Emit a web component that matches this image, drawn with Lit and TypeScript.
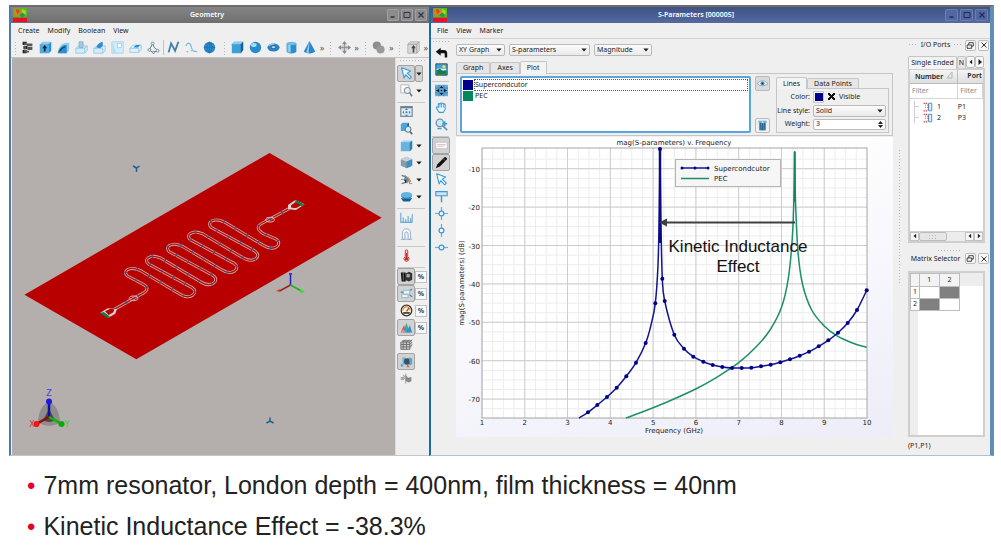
import { LitElement, html, css, svg } from "lit";
import { customElement } from "lit/decorators.js";

type Pt = [number, number];

/* 16 x 16 drawings used by the tool bars */
const B = "#2f8fce";
const L = "#8fcbee";
const D = "#1b5f96";
const icons: Record<string, unknown> = {
  logo: svg`<path d="M0 0h16v16H0z" fill="#58b52c"/><path d="M1 1h6l3 3-2 4-5 1-2-3z" fill="#c98a20"/><path d="M3 2l3-1 2 3-3 3z" fill="#e2431c"/><path d="M10 1l5 2-1 5-4-2z" fill="#a9d421"/><path d="M7 8l4-3 3 3-3 3z" fill="#2a9a48"/><path d="M0 11h16v5H0z" fill="#e8102a"/>`,
  film: svg`<path d="M2 1h5v4H2zM3 6h5v4H3zM2 11h5v4H2z" fill="#222"/><path d="M7 3h7v3H7zM8 7h6v4H8zM7 12h3v2H7z" fill="#555"/><path d="M5 2v12" stroke="#999"/>`,
  boxUp: svg`<path d="M1 4l3-3h11v11l-3 3H1z" fill="${L}"/><path d="M1 4h11v11H1z" fill="#4eabe0"/><path d="M12 4l3-3v11l-3 3z" fill="${B}"/><path d="M6 13V9H4l3-4 3 4H8v4z" fill="#0b2438"/>`,
  sweep: svg`<path d="M1 14C2 7 6 2 12 2h3v9l-3 4H1z" fill="${L}"/><path d="M1 14C4 7 7 5 12 5v10H1z" fill="${B}"/><path d="M3 13c2-4 4-5 7-6" stroke="#145" fill="none" stroke-width="1.500"/>`,
  stack1: svg`<path d="M1 9l4-3h10v6l-3 3H1z" fill="#d4ecfa" stroke="#8cc6e8"/><path d="M1 9h11v6M12 9l3-3" fill="none" stroke="#8cc6e8"/><path d="M5 1h5v7H5z" fill="#a9c8dc" stroke="#7fb0cf"/>`,
  stack2: svg`<path d="M1 9l4-3h10v6l-3 3H1z" fill="#d4ecfa" stroke="#8cc6e8"/><path d="M1 9h11v6" fill="none" stroke="#8cc6e8"/><path d="M4 8C5 4 8 2 12 1v5L9 9z" fill="${B}"/>`,
  sheet: svg`<path d="M1 1h14v14H1z" fill="#d2ecf9" stroke="#9fd3f0"/><path d="M2 2l5 13H2z" fill="#b8def4"/><rect x="8" y="3" width="5" height="5" fill="#fff" stroke="#9fd3f0"/>`,
  slab: svg`<path d="M1 9l4-4h10v5l-3 4H1z" fill="#e0f1fb" stroke="#8cc6e8"/><path d="M1 9h11v5" fill="none" stroke="#8cc6e8"/><path d="M6 7l3-2h5l-3 3H6z" fill="${B}"/>`,
  nodes: svg`<path d="M3 11L7 3l2 5 5 4-7 2z" fill="none" stroke="#5e7f95" stroke-width="1.200"/><g fill="#fff" stroke="#5e7f95"><circle cx="7" cy="3" r="1.700"/><circle cx="3" cy="11" r="1.700"/><circle cx="13" cy="12" r="1.700"/><circle cx="8" cy="14" r="1.400"/></g>`,
  poly: svg`<path d="M2 14L5 3l5 9 4-11" fill="none" stroke="#3f7fae" stroke-width="2.200"/>`,
  curve: svg`<path d="M1 6c3-6 6-3 7 2s3 5 7 5" fill="none" stroke="#7db8dc" stroke-width="1.500"/><path d="M2 13h2M7 12h2" stroke="#7db8dc" stroke-width="1.500"/>`,
  globe: svg`<circle cx="8" cy="8" r="7" fill="#2a86c8"/><path d="M1 8h14M8 1v14M8 1q-6 7 0 14M8 1q6 7 0 14" fill="none" stroke="#1f6aa5" stroke-width=".7"/>`,
  cube: svg`<path d="M1 4l3-3h11v10l-3 4H1z" fill="#3f9fd9"/><path d="M1 4l3-3h11l-3 3z" fill="${L}"/><path d="M12 4l3-3v10l-3 4z" fill="${D}"/>`,
  sphere: svg`<circle cx="8" cy="8" r="7" fill="#2a8bcb"/><ellipse cx="6" cy="5" rx="3.500" ry="2.500" fill="#a8daf5"/>`,
  torus: svg`<ellipse cx="8" cy="8" rx="7.500" ry="5" fill="#2a83c0"/><ellipse cx="8" cy="7.500" rx="3" ry="1.500" fill="#f4f4f4" stroke="${D}"/><path d="M2 6q3-3 7-2" stroke="${L}" stroke-width="1.500" fill="none"/>`,
  cylinder: svg`<path d="M2 3v10c0 3 12 3 12 0V3z" fill="#2f8fce"/><path d="M3 4v10h4V4z" fill="${L}"/><ellipse cx="8" cy="3" rx="6" ry="2" fill="#70bce6"/>`,
  cone: svg`<path d="M8 0l7 13c-2 3-12 3-14 0z" fill="#2a86c8"/><path d="M8 0L4 14l3 1z" fill="${L}"/>`,
  move: svg`<path d="M8 2v12M2 8h12" fill="none" stroke="#909090" stroke-width="1.500"/><path d="M8 0L5 4h6zM8 16l-3-4h6zM0 8l4-3v6zM16 8l-4-3v6z" fill="#888"/><ellipse cx="8" cy="8" rx="4" ry="2" fill="none" stroke="#aaa"/>`,
  union: svg`<circle cx="6" cy="5.500" r="5" fill="#8d8d8d"/><circle cx="10.500" cy="10.500" r="5" fill="#999"/>`,
  grayBox: svg`<path d="M1 4l3-3h11v11l-3 3H1z" fill="#d8d8d8" stroke="#aaa"/><path d="M12 4v11M1 4h11l3-3" stroke="#999" fill="none"/><path d="M7 14V9H5l3-4 3 4H9v5z" fill="#444"/>`,
  arrow: svg`<path d="M2 1l11 4-4 2.500 5 5-2 2-5-5-2 4z" fill="#eaf6fd" stroke="#3a9ad6" stroke-width="1.300" stroke-linejoin="round"/>`,
  zoomBox: svg`<path d="M1 1h10v10H1z" fill="#fff" stroke="#aaa"/><circle cx="9" cy="8" r="3.700" fill="#e6f0f6" stroke="#8a97a0" stroke-width="1.300"/><path d="M12 11l3 4" stroke="#6b7880" stroke-width="2"/>`,
  fit: svg`<path d="M1 2h14v12H1z" fill="#dfeaf1" stroke="#7c8e9a" stroke-width="1.500"/><path d="M1 3h14" stroke="#6c7e8a" stroke-width="2"/><path d="M8 4l2 2H6zM8 14l2-2H6zM3 9l2-2v4zM13 9l-2-2v4z" fill="#3388c2"/><circle cx="8" cy="9" r="1.300" fill="#3388c2"/>`,
  zoomCube: svg`<path d="M1 3l2-2h8v8l-2 2H1z" fill="#4ca5db"/><path d="M9 3l2-2v8l-2 2z" fill="${D}"/><circle cx="10" cy="9" r="3.500" fill="#dceefa" stroke="#6e8392" stroke-width="1.300"/><path d="M12.500 12l2.500 3" stroke="#566" stroke-width="2"/>`,
  cubeFlat: svg`<path d="M1 4l3-2h11v10l-3 3H1z" fill="#67b3e0"/><path d="M1 4l3-2h11l-3 2z" fill="#a9d8f2"/><path d="M12 4l3-2v10l-3 3z" fill="#347ead"/>`,
  cubeGray: svg`<path d="M8 1l7 3v8l-7 3-7-3V4z" fill="#8a9aa6"/><path d="M8 1l7 3-7 3-7-3z" fill="#c3d2dc"/><path d="M8 7l7-3v8l-7 3z" fill="#3f8fc4"/>`,
  orbit: svg`<path d="M2 3l6 2 4 7M2 13l7-2" stroke="#777" fill="none" stroke-width="1.500"/><path d="M6 2l5 5-2 6-4-4z" fill="#5c8fb0"/><path d="M10 4l4 6-3 2z" fill="#e08a3c"/><path d="M5 8l3 1-1 4z" fill="#222"/><path d="M1 8h4M11 13h4" stroke="#888"/>`,
  layers: svg`<path d="M1 10l3 4h8l3-4z" fill="#1f5f8e"/><path d="M1 7l3 4h8l3-4z" fill="#2f80b8"/><ellipse cx="8" cy="6" rx="7" ry="3.500" fill="#62b4e2"/>`,
  ruler: svg`<path d="M1 2v12h14M4 14V8M7 14V10M10 14V6M13 14V9M15 14V4" stroke="#6aa9cf" fill="none" stroke-width="1.400"/>`,
  magnet: svg`<path d="M3 14V6a5 5 0 0 1 10 0v8h-3V7a2 2 0 0 0-4 0v7z" fill="#f6f9fc" stroke="#9fb4cc" stroke-width="1.300"/><path d="M1 14h14" stroke="#9fb4cc"/>`,
  thermo: svg`<path d="M6.500 2.500a1.500 1.500 0 0 1 3 0v7a3 3 0 1 1-3 0z" fill="#f6dada" stroke="#c43c3c" stroke-width="1.200"/><circle cx="8" cy="12" r="2.200" fill="#c92a2a"/><path d="M8 5v7" stroke="#c92a2a" stroke-width="1.500"/>`,
  darkCube: svg`<path d="M1 3h6v11H2z" fill="#111"/><path d="M6 5l5-3 4 2v8l-4 2-5-2z" fill="#333"/><path d="M8 5h4v4H8z" fill="#aaa"/><path d="M4 2v11" stroke="#888"/>`,
  wire: svg`<path d="M4 4h8v5H4zM2 9h8v4H2z" fill="#e4f2fa" stroke="#8fb0c4"/><path d="M1 6l3 1M12 10l3 2M12 4l3-1" stroke="#3e8ab8" stroke-width="1.500"/>`,
  gauge: svg`<circle cx="8" cy="8" r="6.500" fill="#faf4de" stroke="#333" stroke-width="1.500"/><path d="M3.500 8a4.500 4.500 0 0 1 9 0" fill="none" stroke="#d9953b" stroke-width="1.500"/><path d="M8 9l3-4" stroke="#c22" stroke-width="1.300"/><path d="M4 11h8" stroke="#333" stroke-width="2"/>`,
  peaks: svg`<path d="M1 14L5 5l3 9z" fill="#e34a4a"/><path d="M4 14l4-12 4 12z" fill="#29b39a"/><path d="M8 14l4-9 3 9z" fill="#3d86dc"/><path d="M1 14l3-4 3 4z" fill="#f08ab4"/>`,
  mesh: svg`<path d="M1 5l3-3h11v9l-3 3H1z" fill="#c9c9c9"/><path d="M1 5h11v9H1zM1 8h11M1 11h11M4 5v9M8 5v9M12 5l3-3M12 8l3-3M12 11l3-3M4 5l3-3M8 5l3-3M2.500 3.500h11" fill="none" stroke="#666"/>`,
  dish: svg`<path d="M3 3h4v9H3z" fill="#6ab4dc"/><circle cx="9" cy="8" r="4" fill="#3d4f5c"/><path d="M11 3l4 1v7l-3 2z" fill="#57a6d4"/><path d="M1 10l4 4H1z" fill="#3f9fd9"/><path d="M9 11l3 4H8z" fill="#c66"/>`,
  burst: svg`<path d="M1 8h11M7 2v12M4 4l8 8" stroke="#aaa" stroke-width="1.500"/><path d="M7 4l3 3 4-1v5l-3 2-4-2z" fill="#888"/><path d="M1 6h4v4H1z" fill="#aaa"/>`,
  undo: svg`<path d="M1 7l6-5v3h4c3 0 4 2 4 4v5h-3v-4c0-1-1-1-2-1H7v3z" fill="#111"/>`,
  image: svg`<path d="M1 1h14v14H1z" fill="#3ba4e4" stroke="#333"/><path d="M2 7h12v2H2z" fill="#eef"/><path d="M2 9l4-2 4 3 4-1v5H2z" fill="#15803c"/><circle cx="11" cy="4.500" r="2" fill="#f6dc3c"/>`,
  fit4: svg`<path d="M0 1h16v14H0z" fill="#62aede"/><path d="M0 5h16M0 11h16M5 1v14M11 1v14" stroke="#3f7fae"/><path d="M8 2l2 3H6zM8 14l2-3H6zM1 8l4-2v4zM15 8l-4-2v4zM7 7h2v2H7z" fill="#0d1c28"/>`,
  hand: svg`<path d="M5 14L2 9c-1-2 1-2 2-1V4c0-1 1.500-1 2 0 0-2 2-2 2 0 0-2 2-2 2.500 0 0-1 2-1 2 .500V10l-2 4z" fill="#eaf6fd" stroke="#3a9ad6" stroke-width="1.300" stroke-linejoin="round"/><path d="M6 4v4M8 3.500V8M10.500 4v4" stroke="#3a9ad6"/>`,
  zoomPm: svg`<circle cx="6" cy="6" r="4.500" fill="#cfe8f7" stroke="#6d95b0" stroke-width="1.600"/><path d="M9 9l6 6" stroke="#6d95b0" stroke-width="2.200"/><path d="M9 7h6M12 4v6M3 13h5" stroke="#3a9ad6" stroke-width="1.800"/>`,
  legend: svg`<path d="M1 4h14v8H1z" fill="#fbfbfb" stroke="#bdbdbd"/><path d="M3 7h10" stroke="#e3a0a0"/><path d="M3 9h8" stroke="#b5c9e0"/>`,
  pen: svg`<path d="M1 15l2-5 8-8c1-1 2-1 3 0s1 2 0 3l-8 8z" fill="#111"/><path d="M10 3l3 3" stroke="#777"/>`,
  flag: svg`<path d="M1 2h14v5H1z" fill="#cfe2ee" stroke="#3a9ad6" stroke-width="1.300"/><path d="M8 7v8" stroke="#3a9ad6" stroke-width="1.800"/>`,
  markXY: svg`<path d="M8 0v16M0 8h16" stroke="#62b0de" stroke-width="1.500"/><circle cx="8" cy="8" r="3" fill="#f4fafd" stroke="#3a9ad6" stroke-width="1.500"/>`,
  markY: svg`<path d="M8 0v16" stroke="#62b0de" stroke-width="1.500"/><circle cx="8" cy="8" r="3" fill="#f4fafd" stroke="#3a9ad6" stroke-width="1.500"/>`,
  markX: svg`<path d="M0 8h16" stroke="#62b0de" stroke-width="1.500"/><circle cx="8" cy="8" r="3" fill="#f4fafd" stroke="#3a9ad6" stroke-width="1.500"/>`,
  eye: svg`<path d="M0 8q8-8 16 0q-8 7-16 0z" fill="#eef5fa" stroke="#7a97aa"/><circle cx="8" cy="8" r="3" fill="#3d8fc4"/><circle cx="8" cy="8" r="1" fill="#123"/>`,
  trash: svg`<path d="M2 1h12v3H2z" fill="#79b4d4"/><path d="M3 4h10v11H3z" fill="#4a8fb8"/><path d="M5 4l1 11M8 4v11M11 4l-1 11" stroke="#1d587e" fill="none"/><path d="M7 1l2 4" stroke="#dff"/>`,
  port: svg`<path d="M9 2h5v12H9z" fill="#dff0fb" stroke="#3a8fd0" stroke-width="1.500"/><path d="M1 2h7M1 14h7M8 4v8" stroke="#d03030" stroke-width="2" stroke-dasharray="2 1.500"/><path d="M4 4v8" stroke="#4a78b0" stroke-dasharray="2 1.500"/>`,
  restore: svg`<path d="M5 3h8v6H5z" fill="none" stroke="#333" stroke-width="1.600"/><path d="M2 7h8v6H2z" fill="#f4f4f4" stroke="#333" stroke-width="1.600"/>`,
  close: svg`<path d="M3 3l10 10M13 3L3 13" stroke="#333" stroke-width="2"/>`,
  winMin: svg`<path d="M3 12h8" stroke="currentColor" stroke-width="3"/>`,
  winMax: svg`<path d="M2 3h12v10H2z" fill="none" stroke="currentColor" stroke-width="2"/>`,
  winClose: svg`<path d="M3 3l10 10M13 3L3 13" stroke="currentColor" stroke-width="2.600"/>`,
  left: svg`<path d="M11 2v12L4 8z" fill="currentColor"/>`,
  right: svg`<path d="M5 2v12l7-6z" fill="currentColor"/>`,
  down: svg`<path d="M1 4h14L8 12z" fill="currentColor"/>`,
};

const icon = (name: string, size = 13) =>
  html`<svg class="ic" width=${size} height=${size} viewBox="0 0 16 16" aria-hidden="true">${icons[name]}</svg>`;

const tool = (name: string, on = false) =>
  html`<button class="tool ${on ? "on" : ""}" aria-label=${name}>${icon(name)}</button>`;

const windowBar = (title: string) => html`
  <header class="title">
    ${icon("logo", 14)}
    <h1>${title}</h1>
    <button aria-label="Minimize">${icon("winMin", 8)}</button>
    <button aria-label="Maximize">${icon("winMax", 8)}</button>
    <button aria-label="Close">${icon("winClose", 8)}</button>
  </header>`;

const menuBar = (items: string[]) =>
  html`<nav class="menu">${items.map((m) => html`<button>${m}</button>`)}</nav>`;

const shared = css`
  * { box-sizing: border-box; }
  :host {
    display: flex;
    flex-direction: column;
    min-width: 0;
    background: #efefef;
    color: #1c1c1c;
    font: 7px/10px "Noto Sans", "Open Sans", sans-serif;
  }
  button, input, select { font: inherit; color: inherit; margin: 0; padding: 0; border: 0; background: none; border-radius: 0; }
  button { display: flex; align-items: center; justify-content: center; }
  h1, h2 { font: inherit; margin: 0; }
  .ic { display: block; flex: none; }
  .title { display: flex; align-items: center; gap: 2px; height: 16px; padding: 0 2px; color: #fff; }
  .title h1 { flex: 1; text-align: center; font-weight: 600; }
  .title button { width: 12px; height: 12px; border: 1px solid; border-radius: 1px; }
  .menu { display: flex; gap: 8px; height: 15px; align-items: center; }
  .tool { width: 18px; height: 17px; flex: none; border: 1px solid transparent; }
  .tool.on { background: #d2d2d2; border-color: #a3a3a3; border-radius: 2px; }
  .sep { flex: none; height: 4px; width: 28px; border-bottom: 1px solid #c9c9c9; }
  .grip { flex: none; background: radial-gradient(circle, #b9b9b9 0 0.8px, transparent 1px) 0 0 / 3px 3px; }
`;

@customElement("geometry-window")
class GeometryWindow extends LitElement {
  static styles = [
    shared,
    css`
      :host { border: solid #4c7da6; border-width: 2px 0 0 2px; border-top-color: #6d6d6d; border-bottom: 1px solid #c6c6c6; }
      .title { background: linear-gradient(#858585, #6e6e6e); }
      .title button { background: #8c8c8c; border-color: #a0a0a0; color: #2b3350; }
      .menu { padding-left: 7px; }
      .bar { display: flex; align-items: center; height: 20px; padding-left: 3px; border-bottom: 1px solid #c4c4c4; }
      .bar .grip { width: 4px; height: 14px; }
      .bar .grip:not(:first-child) { margin: 0 2px 0 4px; }
      .vsep { width: 1px; height: 15px; background: #c4c4c4; margin: 0 1px; }
      .more { width: 8px; color: #555; font-size: 9px; }
      .body { display: flex; flex: 1; }
      .view { flex: 1; min-width: 0; margin-left: 1px; background: #b4afad; }
      .view svg { display: block; width: 100%; height: auto; }
      .side { flex: none; width: 34px; padding: 0 1px; border-left: 1px solid #dcdcdc; }
      .side .grip { width: 28px; height: 4px; margin: 1px 0 2px 2px; }
      .row { display: flex; align-items: center; }
      .drop { width: 8px; height: 17px; }
      .drop.on { background: #d2d2d2; border: 1px solid #a3a3a3; border-radius: 2px; }
      .pct { width: 12px; height: 12px; background: #f8f8f8; border: 1px solid #c2c2c2; font-weight: 700; color: #345; }
    `,
  ];

  render() {
    const turns = [0, 1, 2, 3, 4].map((i) => {
      const p = (x: number, y: number) => `${x + 63 * i} ${y - 36.4 * i}`;
      return `L${p(127, 258)} C${p(112, 246)} ${p(130, 226)} ${p(165, 241)} L${p(284, 312)} C${p(315, 332)} ${p(345, 308)} ${p(320, 292)}`;
    });
    const line = `M88 358 L166 314 C192 302 190 291 175 283 ${turns.join(" ")} L535 131 C508 114 520 104 544 93 L612 56`;
    const side: [string, boolean, string][] = [
      ["arrow", true, "drop"], ["zoomBox", false, "drop"], ["|", false, ""], ["fit", false, ""], ["zoomCube", false, ""],
      ["cubeFlat", false, "drop"], ["cubeGray", false, "drop"], ["orbit", false, "drop"], ["layers", false, "drop"],
      ["|", false, ""], ["ruler", false, ""], ["magnet", false, ""], ["|", false, ""], ["thermo", false, ""], ["|", false, ""],
      ["darkCube", true, "pct"], ["wire", true, "pct"], ["gauge", false, "pct"], ["peaks", true, "pct"],
      ["mesh", false, ""], ["dish", true, ""], ["burst", false, ""],
    ];
    return html`
      ${windowBar("Geometry")} ${menuBar(["Create", "Modify", "Boolean", "View"])}
      <div class="bar">
        <span class="grip"></span>
        ${["film", "boxUp", "sweep", "stack1", "stack2", "sheet", "slab", "nodes"].map((n) => tool(n))}
        <span class="vsep"></span>
        ${["poly", "curve", "globe"].map((n) => tool(n))}
        <span class="grip"></span>
        ${["cube", "sphere", "torus", "cylinder", "cone"].map((n) => tool(n))}
        <button class="more">»</button>
        ${["move", "union", "grayBox"].map((n) => html`<span class="grip"></span>${tool(n)}<button class="more">»</button>`)}
      </div>
      <div class="body">
        <div class="view">
          <svg viewBox="12 58 383 397" role="img" aria-label="Resonator layout">
            <path d="M269.500 153L381.700 217.700 136.300 359.300 24.500 294.700z" fill="#b90000" />
            <g transform="translate(85 190) scale(.33333)" fill="none" stroke-linejoin="round">
              <path d=${line} stroke="#cfaaa6" stroke-width="9" />
              <path d=${line} stroke="#a81414" stroke-width="4" />
              <path d=${line} stroke="#2d5490" stroke-width="11" stroke-dasharray="3 37" />
              <ellipse cx="146" cy="325" rx="13" ry="7" stroke="#d9bdb9" stroke-width="3" />
              <ellipse cx="555" cy="89" rx="13" ry="7" stroke="#d9bdb9" stroke-width="3" />
              <path d="M46 368l22-13 28 2-5 14-21 12z" fill="#d8d2ce" />
              <path d="M60 364l16-8 12 2-3 9-14 8z" fill="#b90000" />
              <path d="M44 369l12-3 18 13-5 6z" fill="#127a42" />
              <path d="M609 45l22-15 28 13-26 17-24-2z" fill="#d8d2ce" />
              <path d="M618 46l14-10 18 9-16 9-15-1z" fill="#b90000" />
              <path d="M632 30l28 14-10 4-20-11z" fill="#127a42" />
            </g>
            <g stroke="#1c5f92" stroke-width="1.500" fill="none">
              <path d="M136.500 168v4M133 166l3.500 2 3-2" />
              <path d="M270 417.500v3.500M266.500 423l3.500-2 3.500 2" />
            </g>
            <g stroke-width="1.500">
              <path d="M290.500 285v-11" stroke="#2222c8" /><path d="M289 273h3v2h-3z" fill="#3a3ad8" />
              <path d="M290.500 285l-11 6" stroke="#a02020" /><path d="M276 291l4-2v3z" fill="#e33" />
              <path d="M290.500 285l11 6" stroke="#18b418" /><path d="M300 289l5 3-5 1z" fill="#3d3" />
            </g>
            <path d="M49 402c7 2 11 12 11 20-5 5-17 5-22 0 0-8 4-18 11-20z" fill="#8f8c8b" />
            <path d="M49 409l6 11q-6 4-12 0z" fill="#4c4a49" />
            <path d="M49 417v-14" stroke="#1010a8" stroke-width="2.500" />
            <circle cx="49" cy="401.500" r="3" fill="#1a1ae0" />
            <path d="M49 417l-11 6" stroke="#8c0c0c" stroke-width="2.500" />
            <circle cx="36.500" cy="424" r="3" fill="#f01414" />
            <path d="M49 417l11 6" stroke="#0cb40c" stroke-width="2.500" />
            <circle cx="61.500" cy="424" r="3" fill="#0ea80e" />
            <g font-family="DejaVu Sans, sans-serif" font-size="8" text-anchor="middle">
              <text x="49" y="396" fill="#4040d8">Z</text>
              <text x="32" y="427" fill="#e03030">X</text>
              <text x="67" y="427" fill="#38d038">Y</text>
            </g>
          </svg>
        </div>
        <div class="side">
          <div class="grip"></div>
          ${side.map(([n, on, extra]) =>
            n === "|"
              ? html`<div class="sep"></div>`
              : html`<div class="row">
                  ${tool(n, on)}
                  ${extra === "drop" ? html`<button class="drop ${on ? "on" : ""}" aria-label="More">${icon("down", 6)}</button>` : ""}
                  ${extra === "pct" ? html`<button class="pct">%</button>` : ""}
                </div>`
          )}
        </div>
      </div>
    `;
  }
}

const blueMarks: Pt[] = [
  [588, 412.3], [597.3, 405], [607, 397], [616.7, 387.7], [626.3, 376.3], [636, 362.7], [645.7, 343], [655.3, 303.3],
  [660, 149], [662.3, 278.7], [664.7, 301], [674.3, 334.7], [684, 348.7], [693.3, 356.7], [703.3, 361.7], [712.7, 365],
  [722.3, 367], [732, 368], [741.7, 368], [751.3, 367.7], [761, 366.3], [770.7, 364.7], [780.3, 362.3], [790, 359.3],
  [799.7, 355.7], [809, 351.7], [818.7, 346.3], [828.3, 340.3], [838, 332.7], [847.7, 323], [857, 310], [866.7, 290.3],
];
const blueRise: Pt[] = [[579, 418], ...blueMarks.slice(0, 7), [651, 325], ...blueMarks.slice(7, 8), [658, 265], [659.3, 210], [660, 149]];
const blueFall: Pt[] = [[660, 149], [660.8, 215], ...blueMarks.slice(9)];
const greenRise: Pt[] = [
  [626, 418], [648, 409.7], [670, 400.7], [695.7, 389], [716.7, 377.3], [738.7, 362.7], [756.7, 346.3], [770, 330],
  [781.7, 306.7], [788.3, 278.3], [792.3, 238.3], [794, 195], [794.7, 151],
];
const greenFall: Pt[] = [
  [794.7, 151], [795.3, 195], [798, 251.7], [802.7, 285], [811.7, 310], [824, 325.7], [836.7, 335.7], [851.7, 342.7], [866.7, 347.3],
];

/* Catmull-Rom spline through the samples */
const smooth = (pts: Pt[]) =>
  pts.slice(1).reduce((d, p, i) => {
    const a = pts[Math.max(i - 1, 0)], b = pts[i], c = pts[Math.min(i + 2, pts.length - 1)];
    return d + `C${b[0] + (p[0] - a[0]) / 6} ${b[1] + (p[1] - a[1]) / 6} ${p[0] - (c[0] - b[0]) / 6} ${p[1] - (c[1] - b[1]) / 6} ${p[0]} ${p[1]}`;
  }, `M${pts[0][0]} ${pts[0][1]}`);

@customElement("parameters-window")
class ParametersWindow extends LitElement {
  static styles = [
    shared,
    css`
      :host { border: solid #1f6aa5; border-width: 2px 4px 1px 2px; border-top-color: #6d6d66; border-bottom-color: #a8c4d8; border-right-color: #5f8fb4; }
      .title { background: linear-gradient(#3f5288, #56699f); }
      .title button { background: #5368a0; border-color: #6b7db0; color: #1f2c58; width: 13px; }
      .menu { padding-left: 6px; border-bottom: 1px solid #d2d2d2; height: 16px; }
      .body { display: flex; flex: 1; }
      .side { flex: none; width: 20px; padding-left: 1px; }
      .side .grip { width: 17px; height: 4px; margin: 1px 0 0; }
      .side .sep { width: 17px; }
      .main { flex: 1; min-width: 0; padding: 5px 0 0 5px; }
      .combos { display: flex; gap: 4px; }
      .combo { position: relative; display: flex; min-width: 0; }
      .combo select { appearance: none; width: 100%; height: 12px; padding: 0 12px 0 2px; line-height: 10px; border: 1px solid #bababa; border-radius: 2px; background: linear-gradient(#fcfcfc, #e9e9e9); }
      .combo .ic { position: absolute; right: 3px; top: 3px; pointer-events: none; }
      .w1 { width: 49px; } .w2 { width: 81px; } .w3 { width: 58px; }
      .tabs { display: flex; align-items: flex-end; }
      .tabs button { height: 11px; padding: 0 6px; border: 1px solid #c6c6c6; border-bottom: 0; border-radius: 2px 2px 0 0; background: #e6e6e6; }
      .tabs .cur { height: 13px; background: #f3f3f3; margin-bottom: -1px; padding-bottom: 1px; position: relative; }
      .combos + .tabs { margin-top: 4px; height: 13px; }
      .panel { display: flex; gap: 4px; height: 63px; padding: 2px 3px; border: 1px solid #c6c6c6; }
      .list { flex: 1; margin: 0; padding: 1px; list-style: none; background: #fff; border: 2px solid #5aa5da; border-radius: 2px; }
      .list li { display: flex; align-items: center; gap: 1px; height: 11px; }
      .list li span { flex: 1; padding-left: 1px; }
      .list li:first-child span { border: 1px dotted #555; padding-left: 0; }
      .sw { width: 10px; height: 10px; }
      .navy { background: #00008b; } .teal { background: #00885a; }
      .acts { display: flex; flex-direction: column; justify-content: space-between; }
      .acts button { width: 15px; height: 15px; border: 1px solid #bababa; border-radius: 2px; background: #f0f0f0; }
      .acts button:first-child { background: #dadada; }
      .line { width: 113px; margin-left: 2px; }
      .line .tabs { height: 12px; }
      .line .tabs button { height: 10px; padding: 0 6px; }
      .line .tabs .cur { height: 12px; }
      .form { display: grid; grid-template-columns: 33px minmax(0, 1fr); gap: 1px 3px; align-items: center; border: 1px solid #c6c6c6; padding: 1px 2px 2px 0; height: 45px; }
      .form > label { white-space: nowrap; justify-self: end; }
      .pick { display: flex; align-items: center; gap: 4px; }
      .pick button { width: 11px; height: 12px; border: 1px solid #c8c8c8; background: #f4f4f4; }
      .pick button span { width: 8px; height: 8px; }
      .pick input { appearance: none; width: 7px; height: 7px; background: linear-gradient(45deg, transparent 38%, #111 38% 62%, transparent 62%), linear-gradient(-45deg, transparent 38%, #111 38% 62%, transparent 62%); }
      .num { display: flex; height: 11px; border: 1px solid #bababa; border-radius: 2px; background: #fff; }
      .num input { flex: 1; min-width: 0; padding-left: 2px; }
      .plot { margin-top: 1px; background: linear-gradient(165deg, #fff 20%, #ededf9); }
      .plot svg { display: block; width: 100%; height: auto; }
      .dock { flex: none; width: 97px; padding-left: 5px; display: flex; }
      .split { flex: none; align-self: center; width: 3px; height: 136px; background: radial-gradient(circle, #b9b9b9 0 0.8px, transparent 1px) 0 0 / 3px 3px; margin: 0 7px 60px 0; }
      .col { flex: 1; min-width: 0; display: flex; flex-direction: column; }
      .head { display: flex; align-items: center; gap: 2px; height: 12px; margin-right: 1px; }
      .head h2 { flex: 1; text-align: center; white-space: nowrap; }
      .head .grip { width: 10px; height: 4px; }
      .head button { width: 11px; height: 11px; border: 1px solid #bcbcbc; border-radius: 2px; background: #f8f8f8; }
      .col .tabs { margin: 5px 5px 0 0; height: 12px; }
      .col .tabs button { padding: 0; height: 12px; white-space: nowrap; overflow: hidden; }
      .col .tabs .cur { width: 49px; height: 13px; }
      .col .tabs .nx { width: 9px; }
      .col .tabs .ar { width: 9px; border: 1px solid #bcbcbc; background: #f8f8f8; border-radius: 2px; }
      .box { flex: 176 1 0; min-height: 0; display: flex; flex-direction: column; justify-content: space-between; margin-right: 5px; border: 2px solid #cfcfcf; background: #fff; }
      table { border-collapse: collapse; table-layout: fixed; }
      .ports { width: 100%; }
      .ports th { height: 13px; padding: 0 0 0 5px; font-weight: 600; text-align: left; background: linear-gradient(#f4f4f4, #dedede); border-right: 1px solid #bcbcbc; border-bottom: 1px solid #bcbcbc; white-space: nowrap; overflow: hidden; }
      .ports th .ic { display: inline-block; margin-left: 2px; }
      .ports th:last-child { border-right: 0; padding-left: 9px; }
      .ports td { padding: 0; height: 11px; }
      .ports .flt td { height: 15px; border-bottom: 1px solid #d6d6d6; border-right: 1px solid #d6d6d6; }
      .ports .flt input { width: 100%; padding-left: 2px; }
      .ports input::placeholder { color: #8a8a8a; opacity: 1; }
      .gap td { height: 3px; }
      .node { display: flex; align-items: center; gap: 4px; padding-left: 4px; }
      .node i { width: 5px; height: 11px; border-left: 1px solid #cfcfcf; background: linear-gradient(#cfcfcf, #cfcfcf) 0 5px / 5px 1px no-repeat; }
      .scroll { display: flex; height: 10px; background: #ececec; border-top: 1px solid #d0d0d0; }
      .scroll button { width: 9px; border: 1px solid #c2c2c2; background: #f6f6f6; }
      .scroll .thumb { flex: none; width: 28px; border: 1px solid #bcbcbc; background: #e6e6e6; border-radius: 2px; padding: 1px 8px; }
      .scroll .thumb .grip { display: block; height: 6px; }
      .scroll .fill { flex: 1; }
      .mid { align-self: center; width: 25px; height: 4px; margin: 6px 0 0; }
      .box.mx { flex: 167 1 0; margin-top: 6px; background: linear-gradient(90deg, #ededed 8px, #fff 8px); }
      .mx table { width: 50px; }
      .mx th { height: 13px; padding: 0; font-weight: 400; text-align: center; background: #f3f3f3; border: 1px solid #bdbdbd; }
      .mx td, .mx tbody th { height: 12px; padding: 0; border: 1px solid #bdbdbd; background: #fff; }
      .mx td.sel { background: #808080; }
      .mx .top { background: linear-gradient(#ededed, #ededed) 0 0 / 100% 13px no-repeat; }
      .status { height: 18px; line-height: 18px; }
      .plot text { font-family: "DejaVu Sans", sans-serif; font-size: 7px; fill: #222; }
      .plot .note { font-family: "Liberation Sans", Arial, sans-serif; font-size: 17px; fill: #111; }
    `,
  ];

  combo(cls: string, value: string, id: string) {
    return html`<span class="combo ${cls}"><select id=${id} aria-label=${value}><option>${value}</option></select>${icon("down", 6)}</span>`;
  }

  plot() {
    const X = (g: number) => 482 + (g - 1) * 42.78;
    const Y = (d: number) => 168.7 + (-10 - d) * 3.84;
    const minorX = Array.from({ length: 36 }, (_, i) => X(1 + i / 4));
    const minorY = Array.from({ length: 28 }, (_, i) => Y(-7.5 - i * 2.5));
    const majors = [2, 3, 4, 5, 6, 7, 8, 9];
    const dbs = [-10, -20, -30, -40, -50, -60, -70];
    return html`<div class="plot">
      <svg viewBox="456 137 437 300" role="img" aria-label="S-parameters versus frequency">
        <rect x="482" y="148" width="385" height="270" fill="#fff" />
        <path d=${minorX.map((x) => `M${x} 148V418`).join("") + minorY.map((y) => `M482 ${y}H867`).join("")} stroke="#ededed" />
        <path d=${majors.map((g) => `M${X(g)} 148V418`).join("") + dbs.map((d) => `M482 ${Y(d)}H867`).join("")} stroke="#cdcdcd" />
        <rect x="482" y="148" width="385" height="270" fill="none" stroke="#a6a6a6" />
        <g fill="none" stroke-width="1.500">
          <path d=${smooth(greenRise) + smooth(greenFall)} stroke="#1c8f66" />
          <path d=${smooth(blueRise) + smooth(blueFall)} stroke="#14148c" />
          <path d="M794.700 152v50" stroke="#0f8659" stroke-width="2" />
          <path d="M660 148v95" stroke="#0a0a86" stroke-width="2.500" />
        </g>
        ${blueMarks.map(([x, y]) => svg`<circle cx=${x} cy=${y} r="2" fill="#00008b"/>`)}
        <rect x="675.500" y="159.500" width="105" height="27" fill="#f6f6f6" stroke="#b4b4b4" />
        <path d="M681 168h28" stroke="#14148c" stroke-width="1.500" />
        <g fill="#00008b"><circle cx="682" cy="168" r="1.500" /><circle cx="695" cy="168" r="1.500" /><circle cx="708" cy="168" r="1.500" /></g>
        <path d="M681 178.500h28" stroke="#1c8f66" stroke-width="1.500" />
        <text x="714" y="171">Supercondcutor</text>
        <text x="714" y="181">PEC</text>
        <path d="M665 222.500h130" stroke="#404040" stroke-width="2" />
        <path d="M659 222.500l8-4v8z" fill="#404040" />
        <g text-anchor="middle">
          <text class="note" x="738" y="252">Kinetic Inductance</text>
          <text class="note" x="738" y="272">Effect</text>
          <text x="674" y="145">mag(S-parameters) v. Frequency</text>
          <text x="674" y="433">Frequency (GHz)</text>
          <text transform="translate(464 283) rotate(-90)">mag(S-parameters) (dB)</text>
          ${[1, ...majors, 10].map((g) => svg`<text x=${X(g)} y="425">${g}</text>`)}
        </g>
        <g text-anchor="end">${dbs.map((d) => svg`<text x="480" y=${Y(d) + 3}>${d}</text>`)}</g>
      </svg>
    </div>`;
  }

  render() {
    return html`
      ${windowBar("S-Parameters [000005]")} ${menuBar(["File", "View", "Marker"])}
      <div class="body">
        <div class="side">
          <div class="grip"></div>
          ${["undo", "image"].map((n) => tool(n))}
          <div class="sep"></div>
          ${["fit4", "hand", "zoomPm"].map((n) => tool(n))}
          <div class="sep"></div>
          ${tool("legend", true)} ${tool("pen", true)}
          ${["arrow", "flag", "markXY", "markY", "markX"].map((n) => tool(n))}
        </div>
        <div class="main">
          <div class="combos">${this.combo("w1", "XY Graph", "graph")} ${this.combo("w2", "S-parameters", "data")} ${this.combo("w3", "Magnitude", "part")}</div>
          <div class="tabs"><button>Graph</button><button>Axes</button><button class="cur">Plot</button></div>
          <div class="panel">
            <ul class="list">
              <li><i class="sw navy"></i><span>Supercondcutor</span></li>
              <li><i class="sw teal"></i><span>PEC</span></li>
            </ul>
            <div class="acts">
              <button aria-label="Show">${icon("eye", 11)}</button>
              <button aria-label="Delete">${icon("trash", 11)}</button>
            </div>
            <div class="line">
              <div class="tabs"><button class="cur">Lines</button><button>Data Points</button></div>
              <div class="form">
                <label for="color">Color:</label>
                <div class="pick">
                  <button id="color"><span class="navy"></span></button>
                  <input type="checkbox" id="visible" checked /><label for="visible">Visible</label>
                </div>
                <label for="style">Line style:</label>
                ${this.combo("", "Solid", "style")}
                <label for="weight">Weight:</label>
                <div class="num">
                  <input id="weight" value="3" />
                  <svg width="9" height="9" viewBox="0 0 9 9" aria-hidden="true"><path d="M2 4l2.500-3L7 4zM2 5l2.500 3L7 5z" fill="#222" /></svg>
                </div>
              </div>
            </div>
          </div>
          ${this.plot()}
        </div>
        <aside class="dock">
          <div class="split"></div>
          <div class="col">
            <div class="head">
              <span class="grip"></span><h2>I/O Ports</h2><span class="grip"></span>
              <button aria-label="Float">${icon("restore", 9)}</button><button aria-label="Close">${icon("close", 8)}</button>
            </div>
            <div class="tabs">
              <button class="cur">Single Ended</button><button class="nx">N</button>
              <button class="ar" aria-label="Previous tab">${icon("left", 6)}</button><button class="ar" aria-label="Next tab">${icon("right", 8)}</button>
            </div>
            <div class="box">
              <table class="ports">
                <colgroup><col style="width:66%" /><col /></colgroup>
                <tr>
                  <th>Number <svg class="ic" width="6" height="8" viewBox="0 0 6 8"><path d="M0 7L5 1v6z" fill="none" stroke="#b4b4b4" /></svg></th>
                  <th>Port</th>
                </tr>
                <tr class="flt">
                  <td><input placeholder="Filter" aria-label="Filter number" /></td>
                  <td><input placeholder="Filter" aria-label="Filter port" /></td>
                </tr>
                <tr class="gap"><td></td><td></td></tr>
                ${[["1", "P1"], ["2", "P3"]].map(([n, p]) => html`<tr><td><div class="node"><i></i>${icon("port", 10)}<span>${n}</span></div></td><td>${p}</td></tr>`)}
              </table>
              <div class="scroll">
                <button aria-label="Scroll left">${icon("left", 6)}</button>
                <span class="thumb"><span class="grip"></span></span><span class="fill"></span>
                <button aria-label="Scroll back">${icon("left", 6)}</button><button aria-label="Scroll right">${icon("right", 6)}</button>
              </div>
            </div>
            <span class="grip mid"></span>
            <div class="head">
              <h2>Matrix Selector</h2>
              <button aria-label="Float">${icon("restore", 9)}</button><button aria-label="Close">${icon("close", 8)}</button>
            </div>
            <div class="box mx">
              <div class="top">
                <table>
                  <colgroup><col style="width:18%" /><col /><col /></colgroup>
                  <thead><tr><th></th><th>1</th><th>2</th></tr></thead>
                  <tbody>
                    <tr><th>1</th><td></td><td class="sel"></td></tr>
                    <tr><th>2</th><td class="sel"></td><td></td></tr>
                  </tbody>
                </table>
              </div>
            </div>
            <div class="status">(P1,P1)</div>
          </div>
        </aside>
      </div>
    `;
  }
}

@customElement("app-root")
class AppRoot extends LitElement {
  static styles = css`
    :host { display: block; background: #fff; min-height: 100vh; }
    .desk { display: grid; grid-template-columns: 420fr 565fr; padding: 5px 7px 0 9px; }
    ul { margin: 0; padding: 9px 0 0 27px; list-style: none; font: 25px/41px "Liberation Sans", Arial, sans-serif; color: #222; }
    li { display: flex; gap: 8px; }
    li::before { content: "•"; color: #e4002b; font-size: 24px; }
  `;
  render() {
    return html`
      <main>
        <div class="desk"><geometry-window></geometry-window><parameters-window></parameters-window></div>
        <ul>
          <li>7mm resonator, London depth = 400nm, film thickness = 40nm</li>
          <li>Kinetic Inductance Effect = -38.3%</li>
        </ul>
      </main>
    `;
  }
}
